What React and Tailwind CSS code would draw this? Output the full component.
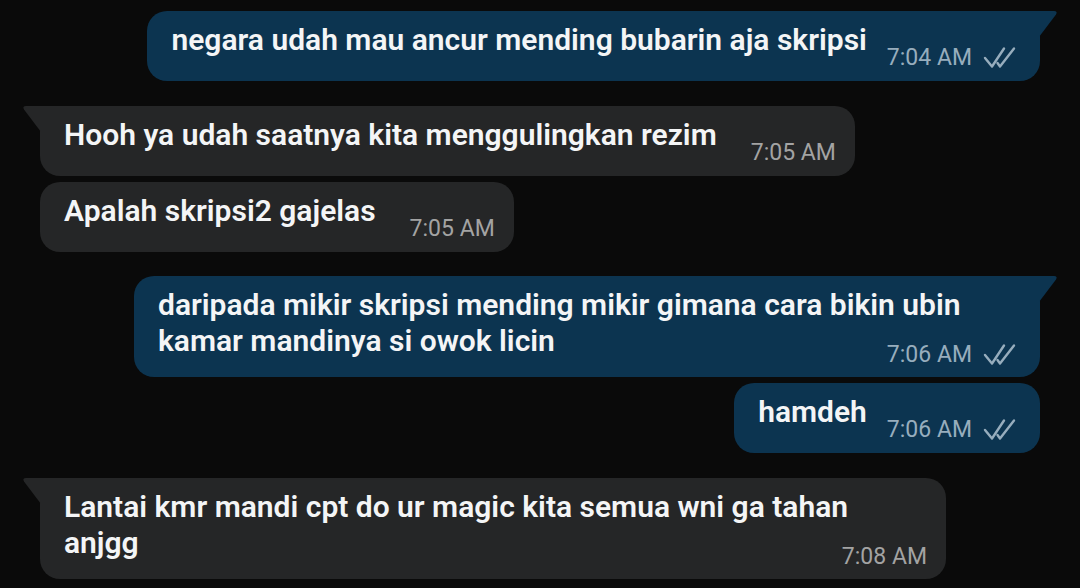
import React from "react";

function Checks() {
  return (
    <svg width="36" height="23" viewBox="0 0 36 23" fill="none" className="ml-[10px] shrink-0">
      <path d="M3 12 L10 20.5 L22 2.5" stroke="#97adbd" strokeWidth="2.4" strokeLinecap="round" strokeLinejoin="round" />
      <path d="M15.5 17 L18 20.5 L32 2.5" stroke="#97adbd" strokeWidth="2.4" strokeLinecap="round" strokeLinejoin="round" />
    </svg>
  );
}

function TailOut() {
  return (
    <svg width="19" height="26" viewBox="0 0 19 26" className="absolute top-0 right-[-18px]">
      <path d="M0 0 L15 0 Q19 0 17 3.5 L0 26 Z" fill="#0c3450" />
    </svg>
  );
}

function TailIn() {
  return (
    <svg width="19" height="26" viewBox="0 0 19 26" className="absolute top-0 left-[-18px]">
      <path d="M19 0 L4 0 Q0 0 2 3.5 L19 26 Z" fill="#252627" />
    </svg>
  );
}

function Time({ out, t }) {
  return (
    <div className="flex items-center shrink-0 h-[23px]">
      <span className={`text-[23px] leading-[23px] font-normal ${out ? "text-[#97adbd]" : "text-[#a3a3a3]"}`}>{t}</span>
      {out && <Checks />}
    </div>
  );
}

function Bubble({ out, tail, t, lines, width }) {
  const bg = out ? "bg-[#0c3450]" : "bg-[#252627]";
  const round = out
    ? tail
      ? "rounded-[20px] rounded-tr-none"
      : "rounded-[20px]"
    : tail
    ? "rounded-[20px] rounded-tl-none"
    : "rounded-[20px]";
  if (lines.length === 1) {
    return (
      <div className={`relative ${bg} ${round} flex items-start pl-[24px] ${out ? "pr-[22px]" : "pr-[19px]"} pt-[11px] pb-[12px]`}>
        {tail && (out ? <TailOut /> : <TailIn />)}
        <div className="text-[30px] leading-[36px] font-semibold text-[#f4f5f6] whitespace-nowrap">{lines[0]}</div>
        <div className={`mt-[24px] ${out ? "ml-[20px]" : "ml-[34px]"}`}>
          <Time out={out} t={t} />
        </div>
      </div>
    );
  }
  return (
    <div className={`relative ${bg} ${round} flex flex-col pl-[24px] ${out ? "pr-[22px]" : "pr-[19px]"} pt-[11px] pb-[11px] ${width}`}>
      {tail && (out ? <TailOut /> : <TailIn />)}
      <div className="text-[30px] leading-[36px] font-semibold text-[#f4f5f6] whitespace-nowrap">
        {lines.map((l, i) => (
          <div key={i}>{l}</div>
        ))}
      </div>
      <div className="flex justify-end mt-[-16px]">
        <Time out={out} t={t} />
      </div>
    </div>
  );
}

export default function App() {
  return (
    <div className="w-[1080px] h-[588px] overflow-hidden bg-[#0a0a0a] font-[Roboto,sans-serif] flex flex-col px-[40px] pt-[11px]">
      <div className="flex justify-end">
        <Bubble out tail t="7:04 AM" lines={["negara udah mau ancur mending bubarin aja skripsi"]} />
      </div>
      <div className="flex justify-start mt-[25px]">
        <Bubble tail t="7:05 AM" lines={["Hooh ya udah saatnya kita menggulingkan rezim"]} />
      </div>
      <div className="flex justify-start mt-[6px]">
        <Bubble t="7:05 AM" lines={["Apalah skripsi2 gajelas"]} />
      </div>
      <div className="flex justify-end mt-[24px]">
        <Bubble
          out
          tail
          t="7:06 AM"
          width="w-[906px]"
          lines={["daripada mikir skripsi mending mikir gimana cara bikin ubin", "kamar mandinya si owok licin"]}
        />
      </div>
      <div className="flex justify-end mt-[6px]">
        <Bubble out t="7:06 AM" lines={["hamdeh"]} />
      </div>
      <div className="flex justify-start mt-[25px]">
        <Bubble
          tail
          t="7:08 AM"
          width="w-[906px]"
          lines={["Lantai kmr mandi cpt do ur magic kita semua wni ga tahan", "anjgg"]}
        />
      </div>
    </div>
  );
}
